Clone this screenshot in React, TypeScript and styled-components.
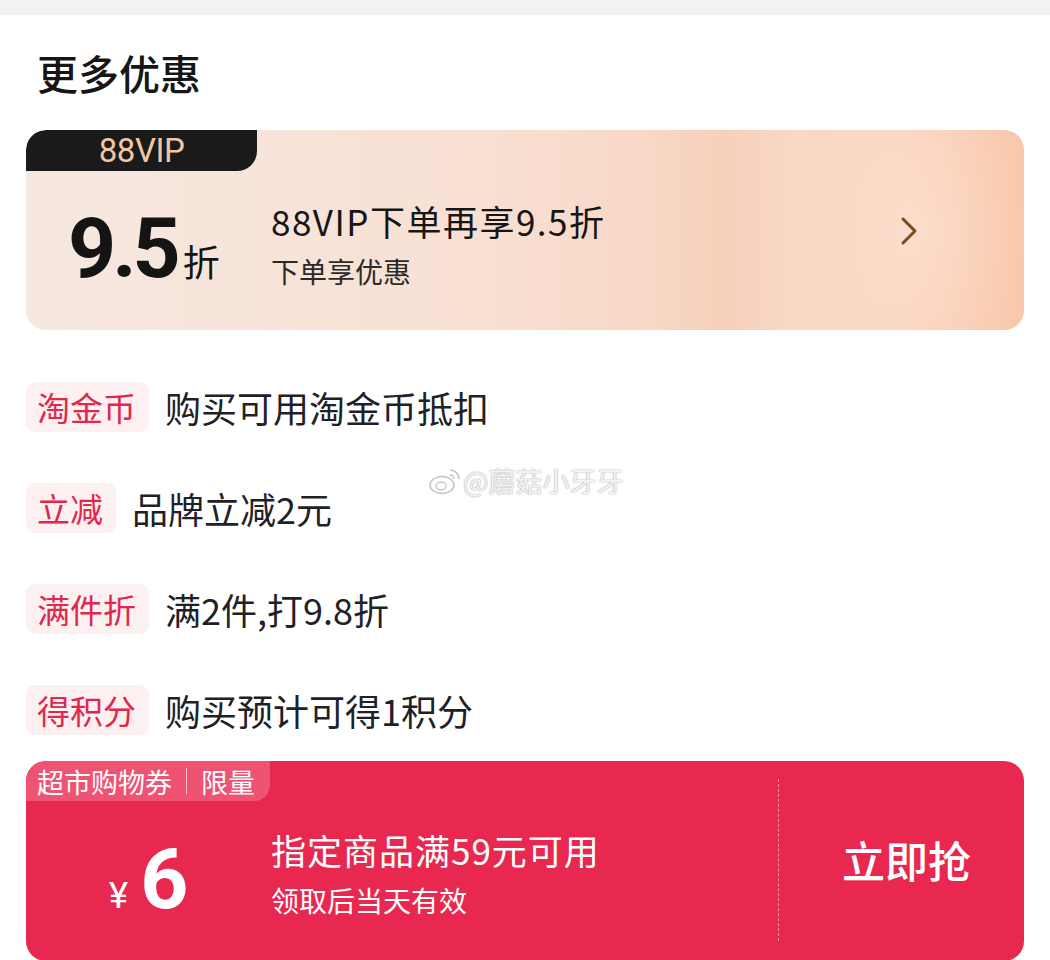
import styled, { createGlobalStyle } from 'styled-components';

const cjk = `'Noto Sans CJK SC', 'Noto Sans', sans-serif`;
const num = `Roboto, 'Noto Sans CJK SC', sans-serif`;

const GlobalStyle = createGlobalStyle`
  html, body {
    margin: 0;
    padding: 0;
    background: #ffffff;
    font-family: ${cjk};
    color: #1d1f23;
  }
`;

const offers = [
  { tag: '淘金币', text: '购买可用淘金币抵扣' },
  { tag: '立减', text: '品牌立减2元' },
  { tag: '满件折', text: '满2件,打9.8折' },
  { tag: '得积分', text: '购买预计可得1积分' },
];

const Page = styled.div`
  position: relative;
  width: 1050px;
  height: 960px;
  overflow: hidden;
`;

const TopStrip = styled.div`
  height: 15px;
  background: #f1f2f4;
`;

const Sheet = styled.div`
  display: flex;
  flex-direction: column;
  padding: 33px 26px 0;
`;

const Title = styled.h2`
  margin: 0 0 0 11px;
  font-size: 41px;
  line-height: 48px;
  font-weight: 500;
  color: #161616;
`;

const VipCard = styled.div`
  position: relative;
  margin-top: 34px;
  height: 200px;
  border-radius: 20px;
  overflow: hidden;
  display: flex;
  flex-direction: column;
  background:
    radial-gradient(ellipse 115px 200px at 890px 100px, rgba(255, 232, 220, 0.5), rgba(255, 232, 220, 0) 100%),
    linear-gradient(90deg, #f6e8e0 0%, #f8e0d3 45%, #f8d8c6 62%, #f6d0ba 70%, #f8d8c6 77%, #f9d2bb 88%, #f9c7aa 100%);
`;

const VipTag = styled.div`
  width: 231px;
  height: 41px;
  background: #1b1a1a;
  border-radius: 20px 0 20px 0;
  display: flex;
  align-items: center;
  justify-content: center;
  font-family: Roboto, sans-serif;
  font-size: 33px;
  letter-spacing: -0.5px;
  color: #f3c6a3;
`;

const VipBody = styled.div`
  flex: 1;
  display: flex;
  align-items: center;
  padding-bottom: 14px;
`;

const Discount = styled.div`
  flex-shrink: 0;
  width: 245px;
  padding-left: 42px;
  box-sizing: border-box;
  display: flex;
  align-items: baseline;
  gap: 6px;
  margin-top: 10px;
`;

const DiscountNum = styled.span`
  font-family: ${num};
  font-weight: 700;
  font-size: 84px;
  line-height: 1;
  letter-spacing: -4px;
  color: #141414;
`;

const DiscountUnit = styled.span`
  font-size: 37px;
  color: #141414;
`;

const VipText = styled.div`
  display: flex;
  flex-direction: column;
  gap: 9px;
`;

const VipHead = styled.div`
  font-size: 35px;
  line-height: 46px;
  letter-spacing: 1.5px;
  color: #161616;
`;

const VipSub = styled.div`
  font-size: 28px;
  line-height: 36px;
  color: #2a2a2a;
`;

const Chevron = styled.svg`
  flex-shrink: 0;
  margin-left: auto;
  margin-right: 106px;
  margin-bottom: 26px;
`;

const OfferList = styled.div`
  display: flex;
  flex-direction: column;
  gap: 51px;
  margin-top: 52px;
`;

const OfferRow = styled.div`
  display: flex;
  align-items: center;
  gap: 16px;
  height: 50px;
`;

const OfferTag = styled.span`
  height: 50px;
  padding: 0 13px 0 11px;
  display: flex;
  align-items: center;
  border-radius: 9px;
  background: #fdf0f1;
  color: #e0274d;
  font-size: 33px;
`;

const OfferText = styled.span`
  font-size: 36px;
  color: #1e2126;
`;

const Coupon = styled.div`
  margin-top: 26px;
  height: 200px;
  border-radius: 20px;
  background: #e8284f;
  display: flex;
  overflow: hidden;
  color: #ffffff;
`;

const CouponMain = styled.div`
  flex: 1;
  display: flex;
  flex-direction: column;
`;

const CouponTag = styled.div`
  align-self: flex-start;
  height: 40px;
  width: 244px;
  box-sizing: border-box;
  padding-left: 11px;
  display: flex;
  align-items: center;
  gap: 14px;
  background: #ef5373;
  border-radius: 20px 0 16px 0;
  font-size: 27px;
`;

const TagDivider = styled.span`
  width: 1px;
  height: 26px;
  background: rgba(255, 255, 255, 0.7);
`;

const CouponBody = styled.div`
  flex: 1;
  display: flex;
  align-items: center;
  padding-bottom: 16px;
`;

const CouponPrice = styled.div`
  width: 245px;
  display: flex;
  align-items: baseline;
  justify-content: center;
  gap: 12px;
  padding-top: 14px;
`;

const Yen = styled.span`
  font-family: ${num};
  font-size: 37px;
`;

const Amount = styled.span`
  font-family: ${num};
  font-weight: 700;
  font-size: 84px;
  line-height: 1;
`;

const CouponText = styled.div`
  display: flex;
  flex-direction: column;
  gap: 10px;
`;

const CouponHead = styled.div`
  font-size: 35px;
  line-height: 44px;
  letter-spacing: 1px;
`;

const CouponSub = styled.div`
  font-size: 28px;
  line-height: 36px;
`;

const DashLine = styled.div`
  width: 0;
  margin: 18px 0 20px;
  border-left: 1.5px dashed rgba(255, 255, 255, 0.5);
`;

const GrabButton = styled.div`
  width: 245px;
  display: flex;
  align-items: center;
  justify-content: center;
  padding: 0 0 4px 10px;
  box-sizing: border-box;
  font-size: 43px;
  font-weight: 500;
`;

const Watermark = styled.div`
  position: absolute;
  left: 428px;
  top: 461px;
  display: flex;
  align-items: center;
  gap: 1px;
  font-size: 27px;
  color: rgba(255, 255, 255, 0.9);
  text-shadow:
    0 0 1px rgba(120, 120, 120, 0.7),
    0 0 2px rgba(120, 120, 120, 0.4);
  pointer-events: none;
`;

export default function App() {
  return (
    <Page>
      <GlobalStyle />
      <TopStrip />
      <Sheet>
        <Title>更多优惠</Title>

        <VipCard>
          <VipTag>88VIP</VipTag>
          <VipBody>
            <Discount>
              <DiscountNum>9.5</DiscountNum>
              <DiscountUnit>折</DiscountUnit>
            </Discount>
            <VipText>
              <VipHead>88VIP下单再享9.5折</VipHead>
              <VipSub>下单享优惠</VipSub>
            </VipText>
            <Chevron width="18" height="30" viewBox="0 0 18 30">
              <path d="M3 3 L15 15 L3 27" fill="none" stroke="#7b4a1f" strokeWidth="3" strokeLinecap="round" strokeLinejoin="round" />
            </Chevron>
          </VipBody>
        </VipCard>

        <OfferList>
          {offers.map((o) => (
            <OfferRow key={o.tag}>
              <OfferTag>{o.tag}</OfferTag>
              <OfferText>{o.text}</OfferText>
            </OfferRow>
          ))}
        </OfferList>

        <Coupon>
          <CouponMain>
            <CouponTag>
              <span>超市购物券</span>
              <TagDivider />
              <span>限量</span>
            </CouponTag>
            <CouponBody>
              <CouponPrice>
                <Yen>¥</Yen>
                <Amount>6</Amount>
              </CouponPrice>
              <CouponText>
                <CouponHead>指定商品满59元可用</CouponHead>
                <CouponSub>领取后当天有效</CouponSub>
              </CouponText>
            </CouponBody>
          </CouponMain>
          <DashLine />
          <GrabButton>立即抢</GrabButton>
        </Coupon>
      </Sheet>

      <Watermark>
        <svg width="34" height="30" viewBox="0 0 34 30">
          <ellipse cx="14" cy="19" rx="12" ry="8.5" fill="none" stroke="rgba(140,140,140,0.55)" strokeWidth="1.5" />
          <ellipse cx="13" cy="20" rx="5" ry="3.8" fill="none" stroke="rgba(140,140,140,0.55)" strokeWidth="1.2" />
          <path d="M22 4 A9 9 0 0 1 31 13" fill="none" stroke="rgba(140,140,140,0.55)" strokeWidth="1.5" />
          <path d="M22 9 A4 4 0 0 1 26 13" fill="none" stroke="rgba(140,140,140,0.55)" strokeWidth="1.5" />
        </svg>
        <span>@蘑菇小牙牙</span>
      </Watermark>
    </Page>
  );
}
